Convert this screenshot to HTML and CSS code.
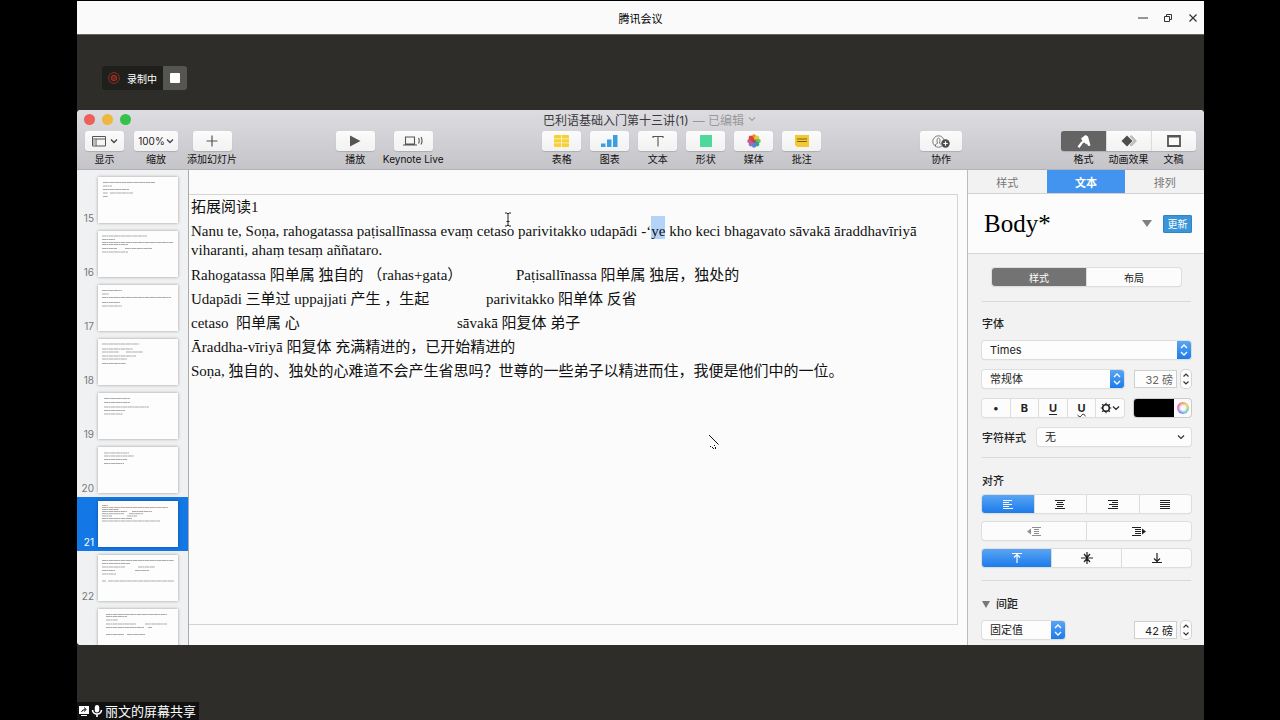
FILE: index.html
```html
<!DOCTYPE html>
<html lang="zh-CN">
<head>
<meta charset="utf-8">
<title>腾讯会议</title>
<link rel="stylesheet" href="styles.css">
</head>
<body>
<div class="meeting">
  <header class="meeting-bar">
    <h1 class="meeting-title">腾讯会议</h1>
    <div class="win-controls">
      <button class="win-btn" aria-label="最小化"><svg width="12" height="12" viewBox="0 0 12 12"><path d="M1 6h10" stroke="#333" fill="none"/></svg></button>
      <button class="win-btn" aria-label="还原"><svg width="12" height="12" viewBox="0 0 12 12"><path d="M2.500 4.500h5v5h-5zM4.500 4.500v-2h5v5h-2" stroke="#333" fill="none"/></svg></button>
      <button class="win-btn" aria-label="关闭"><svg width="12" height="12" viewBox="0 0 12 12"><path d="M2.500 2.500l7 7M9.500 2.500l-7 7" stroke="#333" stroke-width="1.200" fill="none"/></svg></button>
    </div>
  </header>

  <div class="record">
    <span class="record-state">
      <svg width="12" height="12" viewBox="0 0 12 12"><circle cx="6" cy="6" r="5.400" fill="none" stroke="#8a2f22"/><circle cx="6" cy="6" r="2.800" fill="#6e2419" stroke="#9c3526"/></svg>
      录制中
    </span>
    <button class="record-stop" aria-label="停止录制"><span class="stop-square"></span></button>
  </div>

  <main class="keynote">
    <header class="chrome">
      <div class="titlebar">
        <div class="lights"><span class="light red"></span><span class="light yellow"></span><span class="light green"></span></div>
        <div class="doc-title">巴利语基础入门第十三讲(1)<span class="edited">— 已编辑</span><svg width="8" height="6" viewBox="0 0 8 6"><path d="M1 1.500l3 3 3-3" fill="none" stroke="#a2a2a6" stroke-width="1.200"/></svg></div>
      </div>
      <div class="toolbar">
        <div class="group">
          <div class="tool tool-view"><button class="tool-btn" aria-labelledby="t1"><svg width="14" height="12" viewBox="0 0 14 12"><path d="M.5 1.500h13v9.500h-13zM.5 4h13M4 4v7" fill="none" stroke="#555"/><path d="M1 4.500h2.500v6h-2.500z" fill="#bbb"/></svg><svg width="8" height="6" viewBox="0 0 8 6"><path d="M1 1.500l3 3 3-3" fill="none" stroke="#444" stroke-width="1.300"/></svg></button><span class="tool-label" id="t1">显示</span></div>
          <div class="tool tool-zoom"><button class="tool-btn zoom-btn" aria-labelledby="t2">100%<svg width="8" height="6" viewBox="0 0 8 6"><path d="M1 1.500l3 3 3-3" fill="none" stroke="#444" stroke-width="1.300"/></svg></button><span class="tool-label" id="t2">缩放</span></div>
          <div class="tool"><button class="tool-btn" aria-labelledby="t3"><svg width="12" height="12" viewBox="0 0 12 12"><path d="M6 .5v11M.5 6h11" stroke="#555" stroke-width="1.200"/></svg></button><span class="tool-label" id="t3">添加幻灯片</span></div>
        </div>
        <div class="group group-play">
          <div class="tool"><button class="tool-btn" aria-labelledby="t4"><svg width="12" height="12" viewBox="0 0 12 12"><path d="M1 .5l10.500 5.500-10.500 5.500z" fill="#555"/></svg></button><span class="tool-label" id="t4">播放</span></div>
          <div class="tool"><button class="tool-btn" aria-labelledby="t5"><svg width="20" height="12" viewBox="0 0 20 12"><path d="M2.500 2h9v7h-9zM0 10h14M15.500 3q1.500 3 0 5.500M18 2q2 4 0 7.500" fill="none" stroke="#555" stroke-width="1.100"/></svg></button><span class="tool-label" id="t5">Keynote Live</span></div>
        </div>
        <div class="group">
          <div class="tool"><button class="tool-btn" aria-labelledby="t6"><svg width="15" height="12" viewBox="0 0 15 12"><rect width="15" height="12" rx="1" fill="#f6d035"/><path d="M0 3.800h15M0 7.900h15M7.500 0v12" stroke="#fbeeb0" stroke-width="1"/></svg></button><span class="tool-label" id="t6">表格</span></div>
          <div class="tool"><button class="tool-btn" aria-labelledby="t7"><svg width="17" height="12" viewBox="0 0 17 12"><path d="M0 8.500h4.500v3.500h-4.500zM6 4.500h4.500v7.500h-4.500zM12 0h4.500v12h-4.500z" fill="#3b9ee0"/></svg></button><span class="tool-label" id="t7">图表</span></div>
          <div class="tool"><button class="tool-btn" aria-labelledby="t8"><svg width="12" height="12" viewBox="0 0 12 12"><path d="M1 3v-1.500h10v1.500M6 1.500v10" fill="none" stroke="#555" stroke-width="1.100"/></svg></button><span class="tool-label" id="t8">文本</span></div>
          <div class="tool"><button class="tool-btn" aria-labelledby="t9"><svg width="12" height="12" viewBox="0 0 12 12"><rect width="12" height="12" fill="#4fd89b"/></svg></button><span class="tool-label" id="t9">形状</span></div>
          <div class="tool"><button class="tool-btn" aria-labelledby="t10"><svg width="14" height="14" viewBox="-7 -7 14 14"><g opacity=".95"><ellipse cy="-3.700" rx="2.200" ry="3" fill="#f08a24"/><ellipse cy="-3.700" rx="2.200" ry="3" fill="#e3c92e" transform="rotate(45)"/><ellipse cy="-3.700" rx="2.200" ry="3" fill="#6fbf52" transform="rotate(90)"/><ellipse cy="-3.700" rx="2.200" ry="3" fill="#2f9e84" transform="rotate(135)"/><ellipse cy="-3.700" rx="2.200" ry="3" fill="#4a7fd0" transform="rotate(180)"/><ellipse cy="-3.700" rx="2.200" ry="3" fill="#8d6bc4" transform="rotate(225)"/><ellipse cy="-3.700" rx="2.200" ry="3" fill="#c9508e" transform="rotate(270)"/><ellipse cy="-3.700" rx="2.200" ry="3" fill="#dc3c32" transform="rotate(315)"/><circle r="1.800" fill="#b5402c"/></g></svg></button><span class="tool-label" id="t10">媒体</span></div>
          <div class="tool"><button class="tool-btn" aria-labelledby="t11"><svg width="14" height="12" viewBox="0 0 14 12"><path d="M0 0h14v12h-12l-2-2z" fill="#f3c832"/><path d="M2 4h10M2 6.500h10" stroke="#7c6412"/></svg></button><span class="tool-label" id="t11">批注</span></div>
        </div>
        <div class="group">
          <div class="tool"><button class="tool-btn collab-btn" aria-labelledby="t12"><svg width="18" height="13" viewBox="0 0 18 13"><circle cx="6.500" cy="6.500" r="5.700" fill="none" stroke="#777"/><path d="M3.500 11v-1.500l2-1.200q-1.300-4.800 1-5.300q2.300.5 1 5.300l1.500 1" fill="none" stroke="#777"/><circle cx="13.500" cy="8.500" r="4.200" fill="#4b4b4b"/><path d="M11.300 8.500h4.400M13.500 6.300v4.400" stroke="#fff" stroke-width="1.200"/></svg></button><span class="tool-label" id="t12">协作</span></div>
        </div>
        <div class="group group-seg">
          <div class="tool"><button class="tool-btn active" aria-labelledby="t13"><svg width="14" height="13" viewBox="0 0 14 13"><path d="M4 3.500l4.500-3.500 2.500 1.500 2.500 9-2.500.5-1-2.500-.8 1-1.700-2-1.500.5-3.500 5-2-1.500 3.500-4.500 1.500-1z" fill="#fff"/></svg></button><span class="tool-label" id="t13">格式</span></div>
          <div class="tool"><button class="tool-btn" aria-labelledby="t14"><svg width="16" height="12" viewBox="0 0 16 12"><path d="M9 1.500l1.500-1 5 5.500-5 5-1.500-1 4-4z" fill="#c3c3c3" stroke="#999" stroke-width=".5"/><path d="M6 .5l5.500 5.500-5.500 5.500-5.500-5.500z" fill="#4d4d4d"/></svg></button><span class="tool-label" id="t14">动画效果</span></div>
          <div class="tool"><button class="tool-btn" aria-labelledby="t15"><svg width="14" height="12" viewBox="0 0 14 12"><path d="M1 1h12v10h-12z" fill="#fafafa" stroke="#555" stroke-width="1.800"/><path d="M1 1.400h12" stroke="#555" stroke-width="2"/></svg></button><span class="tool-label" id="t15">文稿</span></div>
        </div>
      </div>
    </header>

    <div class="workspace">
      <nav class="slides" aria-label="幻灯片">
        <div class="slide-row"><span class="slide-no">15</span><svg class="thumb" viewBox="0 0 80 46"><g class="ink"><path d="M5 5.500h52M5 9h9M5 12.500h26M5 16h5M12 16h23M5 19.500h5"/></g></svg></div>
        <div class="slide-row"><span class="slide-no">16</span><svg class="thumb" viewBox="0 0 80 46"><g class="ink"><path d="M4 5h45M4 8.500h13M4 11.500h71M4 13.500h26M4 17.500h15M27 17.500h27M4 21h26"/></g></svg></div>
        <div class="slide-row"><span class="slide-no">17</span><svg class="thumb" viewBox="0 0 80 46"><g class="ink"><path d="M4 5.500h20M4 9h7M4 12.500h69M4 17.500h18M4 21h20"/></g></svg></div>
        <div class="slide-row"><span class="slide-no">18</span><svg class="thumb" viewBox="0 0 80 46"><g class="ink"><path d="M4 5h37M4 10h31M4 13h17M28 13h17M4 17h34M4 20h25M4 24.500h24"/></g></svg></div>
        <div class="slide-row"><span class="slide-no">19</span><svg class="thumb" viewBox="0 0 80 46"><g class="ink"><path d="M6 5.500h26M6 9.500h26M6 14h45M6 17.500h21M6 21h19"/></g></svg></div>
        <div class="slide-row"><span class="slide-no">20</span><svg class="thumb" viewBox="0 0 80 46"><g class="ink"><path d="M6 6h25M6 9h30M6 12.500h23M6 16.500h20"/></g></svg></div>
        <div class="slide-row selected"><span class="slide-no">21</span><svg class="thumb" viewBox="0 0 80 46"><g class="ink"><path class="warm" d="M4 4.500h6M4 6.500h66"/><path d="M4 8.500h17M4 10.500h25M34 10.500h20M4 12.700h22M31 12.700h14M4 15h10M29 15h10M4 17.500h30M4 20h58"/></g></svg></div>
        <div class="slide-row"><span class="slide-no">22</span><svg class="thumb" viewBox="0 0 80 46"><g class="ink"><path d="M4 5.500h72M4 8.500h28M4 12h23M40 12h17M4 15.500h13M37 15.500h14M4 19h14M4 26h4M10 26h66"/></g></svg></div>
        <div class="slide-row"><span class="slide-no"></span><svg class="thumb" viewBox="0 0 80 46"><g class="ink"><path d="M8 5.500h61M8 7.500h21M8 11h12M8 15h30M47 15h22M8 18.500h38M50 18.500h4M8 25.500h18M29 25.500h18"/></g></svg></div>
      </nav>

      <section class="canvas">
        <article class="slide">
          <p>拓展阅读1</p>
          <p>Nanu te, Soṇa, rahogatassa paṭisallīnassa evaṃ cetaso parivitakko udapādi -‘<span class="picked">ye</span> kho keci bhagavato sāvakā āraddhavīriyā<br>viharanti, ahaṃ tesaṃ aññataro.</p>
          <p><span class="gloss gloss-a">Rahogatassa 阳单属 独自的 （rahas+gata）</span>Paṭisallīnassa 阳单属 独居，独处的</p>
          <p><span class="gloss gloss-b">Udapādi 三单过 uppajjati 产生 ，生起</span>parivitakko 阳单体 反省</p>
          <p><span class="gloss gloss-c">cetaso &nbsp;阳单属 心</span>sāvakā 阳复体 弟子</p>
          <p>Āraddha-vīriyā 阳复体 充满精进的，已开始精进的</p>
          <p>Soṇa, 独自的、独处的心难道不会产生省思吗？世尊的一些弟子以精进而住，我便是他们中的一位。</p>
        </article>
        <svg class="pointer ibeam" width="8" height="15" viewBox="0 0 8 15"><path d="M1 1h2l1 1 1-1h2M4 2v11M1 14h2l1-1 1 1h2M2.500 9.500h3" fill="none" stroke="#222"/></svg>
        <svg class="pointer trace" width="12" height="16" viewBox="0 0 12 16"><path d="M1 1l9.500 9.500" stroke="#111" fill="none"/><path d="M2 12.500h1M4 13.500h1M6 11.500h1M7 13.500h1M5 14.500h1M7 14.500h1" stroke="#111"/></svg>
      </section>

      <aside class="inspector">
        <div class="tabs" role="tablist">
          <button class="tab" role="tab">样式</button><button class="tab current" role="tab" aria-selected="true">文本</button><button class="tab" role="tab">排列</button>
        </div>
        <div class="para-style">
          <span class="para-name">Body*</span>
          <svg width="10" height="7" viewBox="0 0 10 7"><path d="M0 0h10l-5 7z" fill="#808080"/></svg>
          <button class="update">更新</button>
        </div>
        <div class="panel">
          <div class="seg seg-mode"><button class="seg-btn dark">样式</button><button class="seg-btn">布局</button></div>
          <hr class="rule rule-first">
          <h2 class="heading">字体</h2>
          <div class="select-wrap"><select class="select" aria-label="字体"><option>Times</option></select><svg class="knob" viewBox="0 0 14 18"><path d="M4 7l3-3 3 3M4 11l3 3 3-3"/></svg></div>
          <div class="row">
            <div class="select-wrap grow"><select class="select" aria-label="字重"><option>常规体</option></select><svg class="knob" viewBox="0 0 14 18"><path d="M4 7l3-3 3 3M4 11l3 3 3-3"/></svg></div>
            <div class="number"><input class="field muted" type="text" value="32 磅" aria-label="字号"><button class="stepper" aria-label="调整字号"><svg width="8" height="14" viewBox="0 0 8 14"><path d="M1.500 4.500l2.500-2.500 2.500 2.500M1.500 9.500l2.500 2.500 2.500-2.500"/></svg></button></div>
          </div>
          <div class="row">
            <div class="seg grow">
              <button class="seg-btn" aria-label="项目符号">•</button>
              <button class="seg-btn bold">B</button>
              <button class="seg-btn bold under">U</button>
              <button class="seg-btn bold wavy">U</button>
              <button class="seg-btn" aria-label="高级选项"><svg class="gear" width="20" height="12" viewBox="0 0 20 12"><circle cx="6" cy="6" r="3.300"/><path d="M6 .7v2M6 9.300v2M.7 6h2M9.300 6h2M2.200 2.200l1.400 1.400M8.400 8.400l1.400 1.400M9.800 2.200l-1.400 1.400M3.600 8.400l-1.400 1.400M13 4.500l3 3 3-3"/></svg></button>
            </div>
            <div class="color"><button class="swatch" aria-label="文本颜色"></button><button class="wheel-btn" aria-label="颜色盘"><span class="wheel"></span></button></div>
          </div>
          <div class="row">
            <label class="heading-inline" for="charstyle">字符样式</label>
            <div class="select-wrap grow"><select class="select" id="charstyle"><option>无</option></select><svg class="chev" viewBox="0 0 8 6"><path d="M1 1.500l3 3 3-3"/></svg></div>
          </div>
          <hr class="rule rule-mid">
          <h2 class="heading heading-align">对齐</h2>
          <div class="seg">
            <button class="seg-btn blue" aria-label="左对齐"><svg width="10" height="9" viewBox="0 0 10 9"><path d="M0 .5h9M0 2.500h6M0 4.500h9M0 6.500h6M0 8.500h10"/></svg></button>
            <button class="seg-btn" aria-label="居中"><svg width="10" height="9" viewBox="0 0 10 9"><path d="M0 .5h10M2 2.500h6M1 4.500h8M2 6.500h6M0 8.500h10"/></svg></button>
            <button class="seg-btn" aria-label="右对齐"><svg width="10" height="9" viewBox="0 0 10 9"><path d="M0 .5h10M4 2.500h6M1 4.500h9M4 6.500h6M0 8.500h10"/></svg></button>
            <button class="seg-btn" aria-label="两端对齐"><svg width="10" height="9" viewBox="0 0 10 9"><path d="M0 .5h10M0 2.500h10M0 4.500h10M0 6.500h10M0 8.500h10"/></svg></button>
          </div>
          <div class="seg seg-stack">
            <button class="seg-btn" aria-label="减少缩进"><svg class="pale" width="14" height="9" viewBox="0 0 14 9"><path d="M5 .5h9M7 2.500h5M7 4.500h5M7 6.500h5M5 8.500h9"/><path class="solid" d="M4 1.500v6l-4-3z"/></svg></button>
            <button class="seg-btn" aria-label="增加缩进"><svg width="14" height="9" viewBox="0 0 14 9"><path d="M0 .5h9M3 2.500h6M3 4.500h6M3 6.500h6M0 8.500h9"/><path class="solid" d="M10 1.500v6l4-3z"/></svg></button>
          </div>
          <div class="seg seg-stack">
            <button class="seg-btn blue" aria-label="顶部对齐"><svg width="12" height="12" viewBox="0 0 12 12"><path d="M1 1.500h10M6 2v9M3 5.500l3-3 3 3"/></svg></button>
            <button class="seg-btn" aria-label="垂直居中"><svg width="12" height="12" viewBox="0 0 12 12"><path d="M0 6h12M6 0v12M3 2l3 3.500 3-3.500M3 10l3-3.500 3 3.500"/></svg></button>
            <button class="seg-btn" aria-label="底部对齐"><svg width="12" height="12" viewBox="0 0 12 12"><path d="M1 10.500h10M6 1v9M3 6.500l3 3 3-3"/></svg></button>
          </div>
          <hr class="rule rule-last">
          <h2 class="heading heading-space"><svg width="8" height="7" viewBox="0 0 8 7"><path d="M0 0h8l-4 7z" fill="#777"/></svg>间距</h2>
          <div class="row spacing-row">
            <div class="select-wrap spacing-kind"><select class="select" aria-label="间距类型"><option>固定值</option></select><svg class="knob" viewBox="0 0 14 18"><path d="M4 7l3-3 3 3M4 11l3 3 3-3"/></svg></div>
            <div class="number"><input class="field" type="text" value="42 磅" aria-label="间距"><button class="stepper" aria-label="调整间距"><svg width="8" height="14" viewBox="0 0 8 14"><path d="M1.500 4.500l2.500-2.500 2.500 2.500M1.500 9.500l2.500 2.500 2.500-2.500"/></svg></button></div>
          </div>
        </div>
      </aside>
    </div>
  </main>

  <footer class="sharing">
    <div class="share-tag">
      <svg width="12" height="12" viewBox="0 0 12 12"><path d="M1 1h10v8h-10zM3 10h6v1h-6z" fill="#fff"/><path d="M3.500 7q.5-2.500 4-2.500M6 2.500l2.300 2-2.300 2" stroke="#111" fill="none"/></svg>
      <svg width="12" height="12" viewBox="0 0 12 12"><rect x="3.800" y="0" width="4.400" height="7.500" rx="2.200" fill="#fff"/><path d="M1.500 5q.4 4 4.500 4t4.500-4M6 9v3" stroke="#fff" stroke-width="1.600" fill="none"/></svg>
      <span>丽文的屏幕共享</span>
    </div>
  </footer>
</div>
</body>
</html>
```

FILE: styles.css
```css
* { box-sizing: border-box; }

body {
  margin: 0;
  background: #000;
  color: #222;
  font-family: Inter, "Noto Sans CJK SC", sans-serif;
  font-size: 11px;
}

button, input, select { font: inherit; color: inherit; margin: 0; }
button { padding: 0; border: 0; background: none; }
svg { flex: none; display: block; }

.meeting {
  display: flex;
  flex-direction: column;
  min-height: 100vh;
  margin: 0 76px 0 77px;
  padding-top: 1px;
  background: #2f2d2a;
  background-clip: content-box;
}

.meeting-bar {
  position: relative;
  display: flex;
  align-items: center;
  justify-content: center;
  height: 34px;
  background: #fafafa;
  border-bottom: 1px solid #66645f;
}
.meeting-title { margin: 0; font-size: 11px; font-weight: 400; color: #000; }
.win-controls { position: absolute; right: 5px; display: flex; gap: 13px; }
.win-btn { width: 12px; height: 12px; }

.record {
  display: flex;
  align-self: flex-start;
  height: 24px;
  margin: 31px 0 0 25px;
  border-radius: 3px;
  overflow: hidden;
  color: #fff;
  font-size: 10px;
}
.record-state { display: flex; align-items: center; gap: 7px; padding: 0 6px; background: #1f1f1c; }
.record-stop { display: flex; align-items: center; justify-content: center; width: 24px; background: #555552; }
.stop-square { width: 10px; height: 10px; border-radius: 1px; background: #fff; }

.keynote {
  flex: 1;
  display: flex;
  flex-direction: column;
  min-height: 0;
  margin-top: 20px;
  border-radius: 4px 4px 0 4px;
  overflow: hidden;
  background: #fbfbfb;
}

.chrome {
  height: 60px;
  background: linear-gradient(#dddce0, #c5c4c8);
  border-bottom: 1px solid #b2b1b5;
}
.titlebar { position: relative; display: flex; justify-content: center; align-items: center; height: 18px; }
.lights { position: absolute; left: 7px; display: flex; gap: 7px; }
.light { width: 11px; height: 11px; border-radius: 50%; }
.red { background: #ee5f58; }
.yellow { background: #f0b73e; }
.green { background: #34c24a; }
.doc-title { display: flex; align-items: center; gap: 4px; padding-left: 18px; font-size: 12px; color: #3a3a3d; }
.edited { color: #98989c; }

.toolbar { display: flex; justify-content: space-between; padding: 3px 8px 0 7px; }
.group { display: flex; gap: 9px; }
.tool { display: flex; flex-direction: column; align-items: center; min-width: 39px; }
.tool-view { min-width: 41px; }
.tool-zoom { min-width: 44px; }
.group-play { gap: 8px; }
.tool-btn {
  display: flex;
  align-items: center;
  justify-content: center;
  gap: 4px;
  width: 39px;
  height: 20px;
  border-radius: 3px;
  background: linear-gradient(#fbfbfb, #f2f2f3);
  box-shadow: 0 1px 1px rgba(0, 0, 0, .15);
}
.zoom-btn { width: 44px; gap: 1px; font-size: 10px; }
.collab-btn { width: 42px; }
.tool-label { font-size: 10px; line-height: 16px; color: #111; white-space: nowrap; }
.group-seg { gap: 0; }
.group-seg .tool { width: 45px; }
.group-seg .tool-btn { width: 45px; border-radius: 0; border-left: 1px solid #dcdcdc; }
.group-seg .tool:first-child .tool-btn { border-radius: 3px 0 0 3px; }
.group-seg .tool:last-child .tool-btn { border-radius: 0 3px 3px 0; }
.group-seg .active { background: #646464; border-left-color: #646464; }

.workspace {
  flex: 1 0 0;
  display: grid;
  grid-template-columns: 112px 1fr 237px;
  min-height: 0;
}

.slides {
  overflow: hidden;
  height: 476px;
  padding-top: 3px;
  background: #f0f1f2;
  border-right: 1px solid #aaa;
}
.slide-row { display: flex; align-items: center; gap: 4px; height: 54px; padding-left: 5px; }
.slide-no { display: flex; justify-content: flex-end; align-self: flex-end; width: 12px; padding-bottom: 1px; font-size: 10px; line-height: 16px; color: #777; }
.thumb { width: 80px; height: 46px; background: #fdfdfd; box-shadow: 0 0 3px rgba(0, 0, 0, .35); }
.ink { stroke: #777; stroke-width: 1; stroke-dasharray: 4 .3 2 .3 5 .4; opacity: .6; }
.warm { stroke: #a07860; }
.selected { background: #1378e6; }
.selected .slide-no { color: #fff; }

.canvas { position: relative; padding: 24px 9px 21px 0; background: #fbfbfb; }
.slide {
  height: 100%;
  padding: 3px 0 0 2px;
  border: 1px solid #d4d4d4;
  border-left: 0;
  font-family: "Liberation Serif", "Noto Sans CJK SC", serif;
  font-size: 15px;
  line-height: 19px;
  color: #111;
  white-space: nowrap;
}
.slide p { margin: 0 0 5px; }
.slide p:nth-child(n+3) { position: static; line-height: 20px; }
.slide p:nth-child(n+4) { line-height: 19px; }
.gloss { display: inline-block; }
.gloss-a { width: 325px; }
.gloss-b { width: 295px; }
.gloss-c { width: 266px; }
.picked { padding-top: 7px; background: #b3d4f8; }
.pointer { position: absolute; }
.ibeam { left: 315px; top: 42px; }
.trace { left: 519px; top: 264px; }

.inspector { border-left: 1px solid #bcbcbc; background: #f2f2f2; }
.tabs { display: flex; height: 24px; border-bottom: 1px solid #d2d2d2; }
.tab { flex: 1; color: #777; }
.current { background: #4294ee; color: #fff; font-weight: 700; }
.para-style {
  display: flex;
  align-items: center;
  gap: 11px;
  height: 60px;
  padding: 0 12px 0 16px;
  background: #fcfcfc;
  border-bottom: 1px solid #d6d6d6;
}
.para-name { flex: 1; font-family: "Liberation Serif", serif; font-size: 25px; color: #000; }
.update { width: 29px; height: 18px; border-radius: 2px; background: #3a96d8; color: #fff; font-size: 10px; box-shadow: inset 0 0 0 1px #2f85c4; }

.panel { padding: 14px 13px 0 14px; }
.rule { height: 1px; margin: 0; border: 0; background: #d9d9d9; }
.rule-first { margin-top: 14px; }
.rule-mid { margin-top: 11px; }
.rule-last { margin-top: 13px; }
.heading { display: flex; align-items: center; gap: 6px; margin: 14px 0 9px; font-size: 11px; line-height: 16px; font-weight: 500; color: #222; }
.heading-align { margin: 15px 0 6px; }
.heading-space { margin-top: 15px; }
.heading-inline { width: 45px; color: #222; font-weight: 500; }

.row { display: flex; align-items: center; gap: 10px; margin-top: 11px; }
.spacing-row { justify-content: space-between; margin-top: 0; }
.grow { flex: 1; }

.seg { display: flex; height: 18px; border-radius: 3px; background: #fcfcfc; box-shadow: 0 0 0 1px #dedede, 0 1px 1px rgba(0, 0, 0, .2); overflow: hidden; }
.seg-mode { height: 18px; margin: 0 10px 15px; font-size: 10px; }
.seg-stack { margin-top: 9px; }
.seg-btn { flex: 1; display: flex; align-items: center; justify-content: center; border-left: 1px solid #dcdcdc; }
.seg-btn:first-child { border-left: 0; }
.seg-btn path { fill: none; stroke: #222; stroke-width: 1.2; }
.seg-btn .solid { fill: #222; stroke: none; }
.gear circle { fill: none; stroke: #222; stroke-width: 1.6; }
.pale { opacity: .5; }
.seg .dark { background: #737373; color: #fff; }
.seg .blue { background: linear-gradient(#5aa5f3, #1c7bea); }
.seg .blue path { stroke: #fff; }
.bold { font-weight: 700; }
.under { text-decoration: underline; text-underline-offset: 2px; }
.wavy { text-decoration: underline wavy 1px; }

.select-wrap { position: relative; display: flex; height: 18px; }
.select {
  flex: 1;
  width: 100%;
  height: 18px;
  padding: 0 20px 0 8px;
  border: 0;
  border-radius: 3px;
  appearance: none;
  background: #fdfdfd;
  box-shadow: 0 0 0 1px #dedede, 0 1px 1px rgba(0, 0, 0, .2);
}
.knob { position: absolute; right: 0; top: 0; width: 14px; height: 18px; border-radius: 0 3px 3px 0; background: linear-gradient(#5aa5f3, #1c7bea); pointer-events: none; }
.knob path { fill: none; stroke: #fff; stroke-width: 1.3; }
.chev { position: absolute; right: 6px; top: 6px; width: 8px; height: 6px; pointer-events: none; }
.chev path, .stepper path { fill: none; stroke: #333; stroke-width: 1.2; }

.number { display: flex; gap: 4px; }
.field { width: 43px; height: 18px; padding: 0 3px; border: 1px solid #cfcfcf; background: #fdfdfd; text-align: right; }
.muted { color: #666; }
.stepper { display: flex; align-items: center; justify-content: center; width: 10px; height: 18px; border-radius: 4px; background: #fdfdfd; box-shadow: 0 0 0 1px #d4d4d4; }
.color { display: flex; width: 57px; height: 18px; border-radius: 3px; overflow: hidden; box-shadow: 0 0 0 1px #ccc; background: #fafafa; }
.swatch { flex: 1; background: #000; }
.wheel-btn { display: flex; align-items: center; justify-content: center; width: 17px; }
.wheel { width: 12px; height: 12px; border-radius: 50%; background: radial-gradient(#fafafa 25%, transparent 60%), conic-gradient(#e8a06a, #e8d070, #8fd07c, #6cc7d8, #7f8ce8, #c97ee0, #ee6f9a, #e8a06a); }
.spacing-kind { width: 83px; }

.sharing { display: flex; align-items: flex-end; height: 75px; }
.share-tag { display: flex; align-items: center; gap: 1px; height: 18px; padding: 0 3px 0 1px; background: #111; color: #fff; font-size: 13px; line-height: 18px; }
.share-tag span { padding-left: 1px; }
```
